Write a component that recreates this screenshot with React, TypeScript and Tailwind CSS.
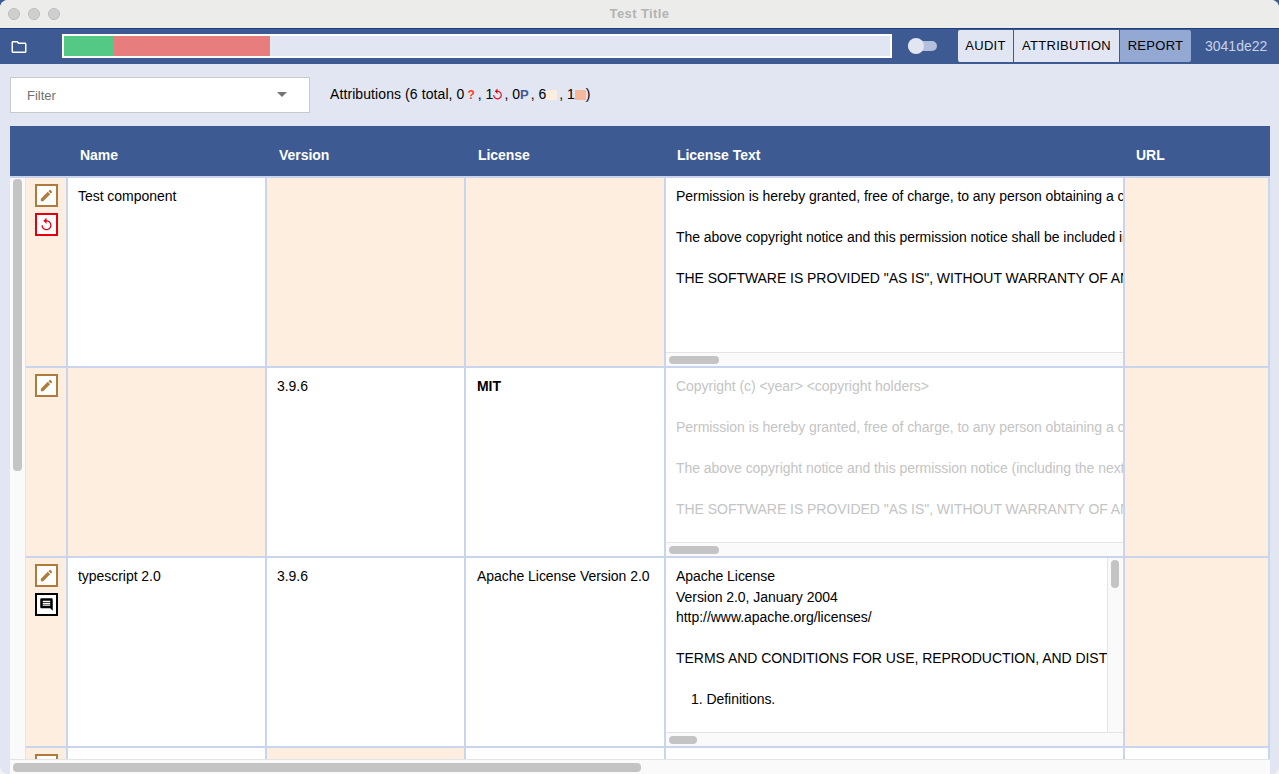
import React from "react";

const EDIT = "M3 17.25V21h3.75L17.81 9.94l-3.75-3.75L3 17.25zM20.71 7.04c.39-.39.39-1.02 0-1.41l-2.34-2.34a.9959.9959 0 0 0-1.41 0l-1.83 1.83 3.75 3.75 1.83-1.83z";
const REPLAY = "M12 5V1L7 6l5 5V7c3.31 0 6 2.69 6 6s-2.69 6-6 6-6-2.69-6-6H4c0 4.42 3.58 8 8 8s8-3.58 8-8-3.58-8-8-8z";
const COMMENT = "M21.99 4c0-1.1-.89-2-1.99-2H4c-1.1 0-2 .9-2 2v12c0 1.1.9 2 2 2h14l4 4-.01-18zM18 14H6v-2h12v2zm0-3H6V9h12v2zm0-3H6V6h12v2z";
const FOLDER = "M9.17 6l2 2H20v10H4V6h5.17M10 4H4c-1.1 0-1.99.9-1.99 2L2 18c0 1.1.9 2 2 2h16c1.1 0 2-.9 2-2V8c0-1.1-.9-2-2-2h-8l-2-2z";

function Icon({ d, className }: { d: string; className: string }) {
  return (
    <svg viewBox="0 0 24 24" fill="currentColor" className={className}>
      <path d={d} />
    </svg>
  );
}

function IconBox({ d, kind }: { d: string; kind: "edit" | "replay" | "comment" }) {
  const cls =
    kind === "edit"
      ? "border-[#b07a3a] text-[#b07a3a] bg-white"
      : kind === "replay"
      ? "border-[#e3000f] text-[#e3000f] bg-white"
      : "border-black text-black bg-white";
  return (
    <div className={`w-[23px] h-[23px] shrink-0 border-2 flex items-center justify-center ${cls}`}>
      <Icon d={d} className="w-[15px] h-[15px]" />
    </div>
  );
}

const cols = "grid grid-cols-[16px_42px_199px_199px_200px_459px_145px]";
const headCols = "grid grid-cols-[16px_42px_199px_199px_199px_459px_146px]";
const MIT1 = "Permission is hereby granted, free of charge, to any person obtaining a copy of this software and associated documentation files";
const MIT2 = "The above copyright notice and this permission notice shall be included in all copies or substantial portions of the Software.";
const MIT2b = "The above copyright notice and this permission notice (including the next paragraph) shall be included in all copies";
const MIT3 = 'THE SOFTWARE IS PROVIDED "AS IS", WITHOUT WARRANTY OF ANY KIND, EXPRESS OR IMPLIED, INCLUDING BUT NOT LIMITED TO';

function Cell({ children, peach, bold, wide }: { children?: React.ReactNode; peach?: boolean; bold?: boolean; wide?: boolean }) {
  return (
    <div
      className={`border-r-2 border-b-2 border-[#c9d5ec] pt-[8px] leading-[20.5px] whitespace-nowrap overflow-hidden ${
        wide ? "pl-[11px]" : "pl-[10px]"
      } ${peach ? "bg-[#fdeee0]" : "bg-white"} ${bold ? "font-bold" : ""}`}
    >
      {children}
    </div>
  );
}

function Gutter() {
  return <div className="bg-[#fafafa] border-r border-[#e4e4e4]" />;
}

function Icons({ children }: { children: React.ReactNode }) {
  return (
    <div className="bg-[#fdeee0] border-r-2 border-b-2 border-[#c9d5ec] pt-[6px] pl-[9px] flex flex-col gap-[6px] overflow-hidden">
      {children}
    </div>
  );
}

function TextCell({ lines, grey, vertical }: { lines: React.ReactNode[]; grey?: boolean; vertical?: boolean }) {
  return (
    <div className="relative border-r-2 border-b-2 border-[#c9d5ec] bg-[#fafafa] flex flex-col overflow-hidden">
      <div className="flex-1 flex min-h-0">
        <div
          className={`flex-1 min-w-0 bg-white pl-[10px] pt-[8px] leading-[20.5px] whitespace-nowrap overflow-hidden ${
            grey ? "text-[#c4c4c4]" : "text-black"
          }`}
        >
          {lines.map((l, i) => (
            <div key={i} className="h-[20.5px]">
              {l}
            </div>
          ))}
        </div>
        {vertical && (
          <div className="w-[16px] shrink-0 bg-[#fafafa] border-l border-[#e4e4e4] pl-[3px] pt-[2px]">
            <div className="w-[8px] h-[28px] rounded bg-[#c4c4c4]" />
          </div>
        )}
      </div>
      <div className="h-[14px] shrink-0 bg-[#fafafa] border-t border-[#e4e4e4] pl-[3px] pt-[3px]">
        <div className={`h-[8px] rounded bg-[#c4c4c4] ${vertical ? "w-[28px]" : "w-[50px]"}`} />
      </div>
    </div>
  );
}

function Row({ children }: { children: React.ReactNode }) {
  return <div className={`${cols} h-[190px] shrink-0`}>{children}</div>;
}

export default function App() {
  return (
    <div className="w-[1279px] h-[774px] overflow-hidden bg-[linear-gradient(#3e5a92_50%,#f2f2f2_50%)] font-['Liberation_Sans',Arial,sans-serif] text-[14px] tracking-[-0.04px] text-black">
      <div className="h-full rounded-[8px] overflow-hidden flex flex-col bg-[#e2e6f3]">
        {/* Title bar */}
        <div className="h-[28px] shrink-0 bg-[#ecedeb] flex items-center relative">
          <div className="flex gap-[8px] pl-[8px]">
            <div className="w-[12px] h-[12px] rounded-full bg-[#cfcfcf] border border-[#bcbcbc]" />
            <div className="w-[12px] h-[12px] rounded-full bg-[#cfcfcf] border border-[#bcbcbc]" />
            <div className="w-[12px] h-[12px] rounded-full bg-[#cfcfcf] border border-[#bcbcbc]" />
          </div>
          <div className="flex-1 text-center font-bold text-[13px] tracking-[0.4px] text-[#b3b3b3] pr-[60px]">Test Title</div>
        </div>

        {/* Top bar */}
        <div className="h-[36px] shrink-0 bg-[#3e5a92] border-t border-[#1f3f78] pb-[1px] flex items-center">
          <div className="w-[62px] pl-[10px] pt-[2px] flex items-center shrink-0">
            <Icon d={FOLDER} className="w-[18px] h-[18px] text-white" />
          </div>
          <div className="w-[830px] h-[24px] border-2 border-white bg-[#e2e6f3] flex shrink-0">
            <div className="w-[50px] bg-[#54c986]" />
            <div className="w-[156px] bg-[#e87d7d]" />
          </div>
          <div className="relative w-[29px] h-[10px] ml-[16px] rounded-full bg-[#b3bfdb] shrink-0">
            <div className="absolute left-0 top-[-3px] w-[16px] h-[16px] rounded-full bg-[#e2e6f3]" />
          </div>
          <div className="flex ml-[21px] h-[32px] shrink-0 text-[13px] tracking-[0.3px]">
            <div className="w-[55px] bg-[#e2e6f3] rounded-l-[2px] flex items-center justify-center">AUDIT</div>
            <div className="w-[105px] ml-[1px] bg-[#e2e6f3] flex items-center justify-center">ATTRIBUTION</div>
            <div className="w-[71px] ml-[1px] bg-[#93a8d3] rounded-r-[2px] flex items-center justify-center">REPORT</div>
          </div>
          <div className="ml-[14px] text-[#c9d2e8] text-[14px] tracking-normal">3041de22</div>
        </div>

        {/* Filter row */}
        <div className="h-[62px] shrink-0 flex items-center pl-[10px] pb-[1px]">
          <div className="w-[300px] h-[36px] bg-white border border-[#c9c9c9] flex items-center justify-between pl-[16px] pr-[22px] text-[13px] tracking-normal text-[#707070]">
            <span className="mt-[2px]">Filter</span>
            <div className="w-0 h-0 border-l-[5px] border-r-[5px] border-t-[5px] border-l-transparent border-r-transparent border-t-[#757575]" />
          </div>
          <div className="ml-[20px] flex items-center whitespace-nowrap tracking-normal">
            <span className="tracking-[0.09px]">Attributions (6 total, 0</span>
            <span className="ml-[3px] font-bold text-[12px] text-[#ff3d1f]">?</span>
            <span className="ml-[3px]">, 1</span>
            <Icon d={REPLAY} className="w-[13px] h-[13px] -ml-[2px] text-[#e3000f]" />
            <span>, 0</span>
            <span className="font-bold text-[13px] text-[#3e5a92]">P</span>
            <span className="ml-[2px]">, 6</span>
            <div className="w-[11px] h-[10px] bg-[#fdeee0]" />
            <span className="ml-[2px]">, 1</span>
            <div className="w-[11px] h-[10px] bg-[#f5b89a]" />
            <span>)</span>
          </div>
        </div>

        {/* Table */}
        <div className="relative flex-1 min-h-0 ml-[10px] mr-[9px] bg-white overflow-hidden flex flex-col">
          <div className={`${headCols} h-[52px] shrink-0 bg-[#3e5a92] border-b-2 border-[#c9d5ec] text-white font-bold`}>
            <div />
            <div />
            {["Name", "Version", "License", "License Text", "URL"].map((h) => (
              <div key={h} className="pl-[12px] pt-[21px] leading-[16px]">
                {h}
              </div>
            ))}
          </div>

          <Row>
            <Gutter />
            <Icons>
              <IconBox d={EDIT} kind="edit" />
              <IconBox d={REPLAY} kind="replay" />
            </Icons>
            <Cell>Test component</Cell>
            <Cell peach />
            <Cell peach />
            <TextCell lines={[MIT1, "", MIT2, "", MIT3]} />
            <Cell peach />
          </Row>
          <Row>
            <Gutter />
            <Icons>
              <IconBox d={EDIT} kind="edit" />
            </Icons>
            <Cell peach />
            <Cell>3.9.6</Cell>
            <Cell bold wide>MIT</Cell>
            <TextCell grey lines={["Copyright (c) <year> <copyright holders>", "", MIT1, "", MIT2b, "", MIT3]} />
            <Cell peach />
          </Row>
          <Row>
            <Gutter />
            <Icons>
              <IconBox d={EDIT} kind="edit" />
              <IconBox d={COMMENT} kind="comment" />
            </Icons>
            <Cell>typescript 2.0</Cell>
            <Cell>3.9.6</Cell>
            <Cell wide>Apache License Version 2.0</Cell>
            <TextCell
              vertical
              lines={[
                "Apache License",
                "Version 2.0, January 2004",
                "http://www.apache.org/licenses/",
                "",
                "TERMS AND CONDITIONS FOR USE, REPRODUCTION, AND DISTRIBUTION",
                "",
                <span className="pl-[15px]">1. Definitions.</span>,
              ]}
            />
            <Cell peach />
          </Row>
          <Row>
            <Gutter />
            <Icons>
              <IconBox d={EDIT} kind="edit" />
            </Icons>
            <Cell />
            <Cell peach />
            <Cell />
            <Cell />
            <Cell />
          </Row>

          {/* Overlay scrollbars */}
          <div className="absolute left-[3px] top-[53px] w-[9px] h-[292px] rounded bg-[#c4c4c4]" />
          <div className="absolute left-0 right-0 bottom-0 h-[15px] bg-[#fafafa] border-t border-[#e4e4e4]">
            <div className="absolute left-[3px] top-[3px] w-[628px] h-[9px] rounded bg-[#c4c4c4]" />
          </div>
        </div>
      </div>
    </div>
  );
}
